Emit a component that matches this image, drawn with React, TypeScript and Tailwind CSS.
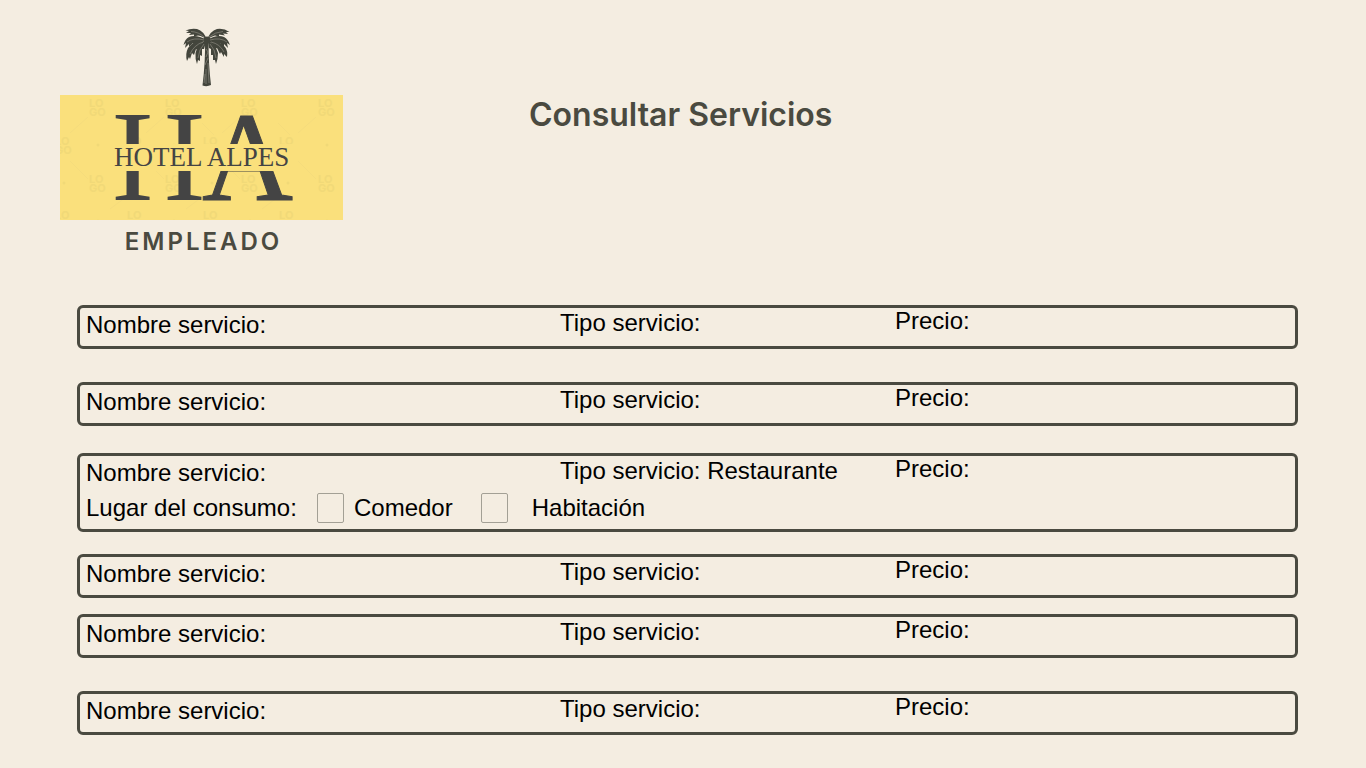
import React from "react";

type Service = { type?: string; places?: string[]; gap: string };

const services: Service[] = [
  { gap: "" },
  { gap: "mt-[33px]" },
  { gap: "mt-[27px]", type: "Restaurante", places: ["Comedor", "Habitación"] },
  { gap: "mt-[22px]" },
  { gap: "mt-4" },
  { gap: "mt-[33px]" },
];

const marks = [
  [38, 4], [114, 4], [190, 4], [267, 4],
  [4, 42], [76, 42], [152, 42], [228, 42],
  [38, 80], [114, 80], [190, 80], [267, 80],
  [4, 116], [76, 116], [152, 116], [228, 116],
];

function Palm() {
  return (
    <svg viewBox="0 0 48 60" className="ml-2.5 h-[60px] w-12 self-center" aria-hidden="true">
      <g fill="#43453c">
        <path d="M22 14 L25.5 14 Q25.5 38 28 58 Q24 60 19.5 58.5 Q22.5 34 22 14Z" />
        <path d="M24 13 Q21 4 14 2 Q8 1 2.5 3.5 L6 4 L3 6 L8 6 L6 8 L11 7.5 L11 9.5 L15 8.5 Q20 9 24 13Z" />
        <path d="M24 13 Q27 4 34 2 Q41 1 46.5 5 L43 5 L45 7 L40 6.5 L42 8.5 L36 7.5 L36 9.5 L32 8.5 Q28 9 24 13Z" />
        <path d="M24 13 Q13 7 6 10 Q2 12 0.5 18 L3 16 L2 21 L6 17 L6 20 L10 16 L11 18 L16 15Z" />
        <path d="M24 13 Q34 7 41 10 Q45 12 47 18 L44 16 L45 21 L41 17 L41 20 L37 16 L36 18 L31 15Z" />
        <path d="M23 12 Q11 13 5 21 Q2 27 4 34 L6 30 L7 32 L9 26 L11 28 L13 22 L15 23 L18 17Z" />
        <path d="M24 12 Q36 13 42 20 Q45 24 44 30 L41 27 L41 30 L38 25 L37 27 L34 21 L32 22 L29 17Z" />
        <path d="M23 13 Q14 18 12.5 26 Q12 32 14 37 L15 33 L17 34 L17 28 L19 29 L19 22 L21 22 L23 15Z" />
        <path d="M24 13 Q33 18 35 26 Q35 32 33 37 L32 33 L30 33 L30 28 L28 28 L28 22 L26 21 L25 15Z" />
        <circle cx="24" cy="13" r="3.5" />
      </g>
      <g stroke="#a6a398" strokeWidth="0.5" fill="none">
        <path d="M21 10Q16 5 8 4.5M26 10Q32 5 40 4.5M21 13Q11 10 4 15M27 13Q37 10 44 15M20 15Q11 18 7 27M28 15Q37 17 41 25M21 17Q16 22 15 31M27 17Q32 22 33 31" />
        <path d="M23 22L25 25M23 30L25 25M22 38L25 31M23 42L23 57M25 36L26 56M22 47L21 56" />
      </g>
    </svg>
  );
}

function Logo() {
  return (
    <svg viewBox="0 0 283 125" className="mt-2 h-[125px] w-[283px]" role="img" aria-label="Hotel Alpes">
      <rect width="283" height="125" fill="#fae07c" />
      <path
        fill="none"
        stroke="#efd77b"
        opacity="0.5"
        d="M10 38L28 22M86 38L104 22M162 38L180 22M238 38L256 22M10 66L28 84M86 66L104 84M162 66L180 84M238 66L256 84M66 28L78 40M142 28L154 40M218 28L230 40M66 102L50 114M142 102L126 114M218 102L202 114"
      />
      <g fill="#f1d978" fontFamily="Inter, sans-serif" fontWeight="700" fontSize="11" aria-hidden="true">
        {marks.map(([x, y]) => (
          <g key={`${x}-${y}`}>
            <text x={x - 9} y={y + 8}>LO</text>
            {y < 110 && <text x={x - 9} y={y + 17}>GO</text>}
            <circle cx={x} cy={y + 46} r="1.5" />
          </g>
        ))}
      </g>
      <g fill="#444444" fontFamily="'Liberation Serif', serif" aria-hidden="true">
        <text x="52" y="105" fontSize="129">H</text>
        <text x="142" y="105" fontSize="126" stroke="#444444">A</text>
      </g>
      <rect x="50" y="49" width="186" height="27" fill="#fae07c" />
      <text x="54" y="71" fontSize="27" fill="#444444" fontFamily="'Liberation Serif', serif">
        HOTEL ALPES
      </text>
    </svg>
  );
}

function ServiceRow({ service }: { service: Service }) {
  return (
    <li className={`rounded-md border-3 border-[#4a4a40] px-1.5 pb-0.5 ${service.gap}`}>
      <div className="grid h-9 grid-cols-[474px_335px_1fr] leading-[26px]">
        <span className="pt-1">Nombre servicio:</span>
        <span className="pt-0.5">Tipo servicio: {service.type}</span>
        <span>Precio:</span>
      </div>
      {service.places && (
        <fieldset className="mb-[3px] flex h-8 items-center">
          <legend className="float-left w-[231px]">Lugar del consumo:</legend>
          {service.places.map((place) => (
            <label key={place} className="mr-7 flex items-center gap-2.5 last:gap-6">
              <input
                type="checkbox"
                className="h-[30px] w-[27px] appearance-none rounded-xs border border-[#a3a095] checked:bg-[#4a4a40]"
              />
              {place}
            </label>
          ))}
        </fieldset>
      )}
    </li>
  );
}

export default function App() {
  return (
    <div className="min-h-screen bg-[#f4ede1] pt-[27px] pr-[68px] pb-8 pl-[60px] font-['Liberation_Sans',sans-serif] text-2xl text-black">
      <header className="flex items-start font-['Inter',sans-serif] text-[#4a4a40]">
        <div className="flex w-[283px] flex-col items-center">
          <Palm />
          <Logo />
          <p className="mt-1.5 pl-1 font-semibold tracking-[3px]">EMPLEADO</p>
        </div>
        <h1 className="mt-[68px] ml-[186px] text-[32px] leading-10 font-semibold">Consultar Servicios</h1>
      </header>
      <main className="mt-[47px] ml-[17px]">
        <ul>
          {services.map((service, i) => (
            <ServiceRow key={i} service={service} />
          ))}
        </ul>
      </main>
    </div>
  );
}
